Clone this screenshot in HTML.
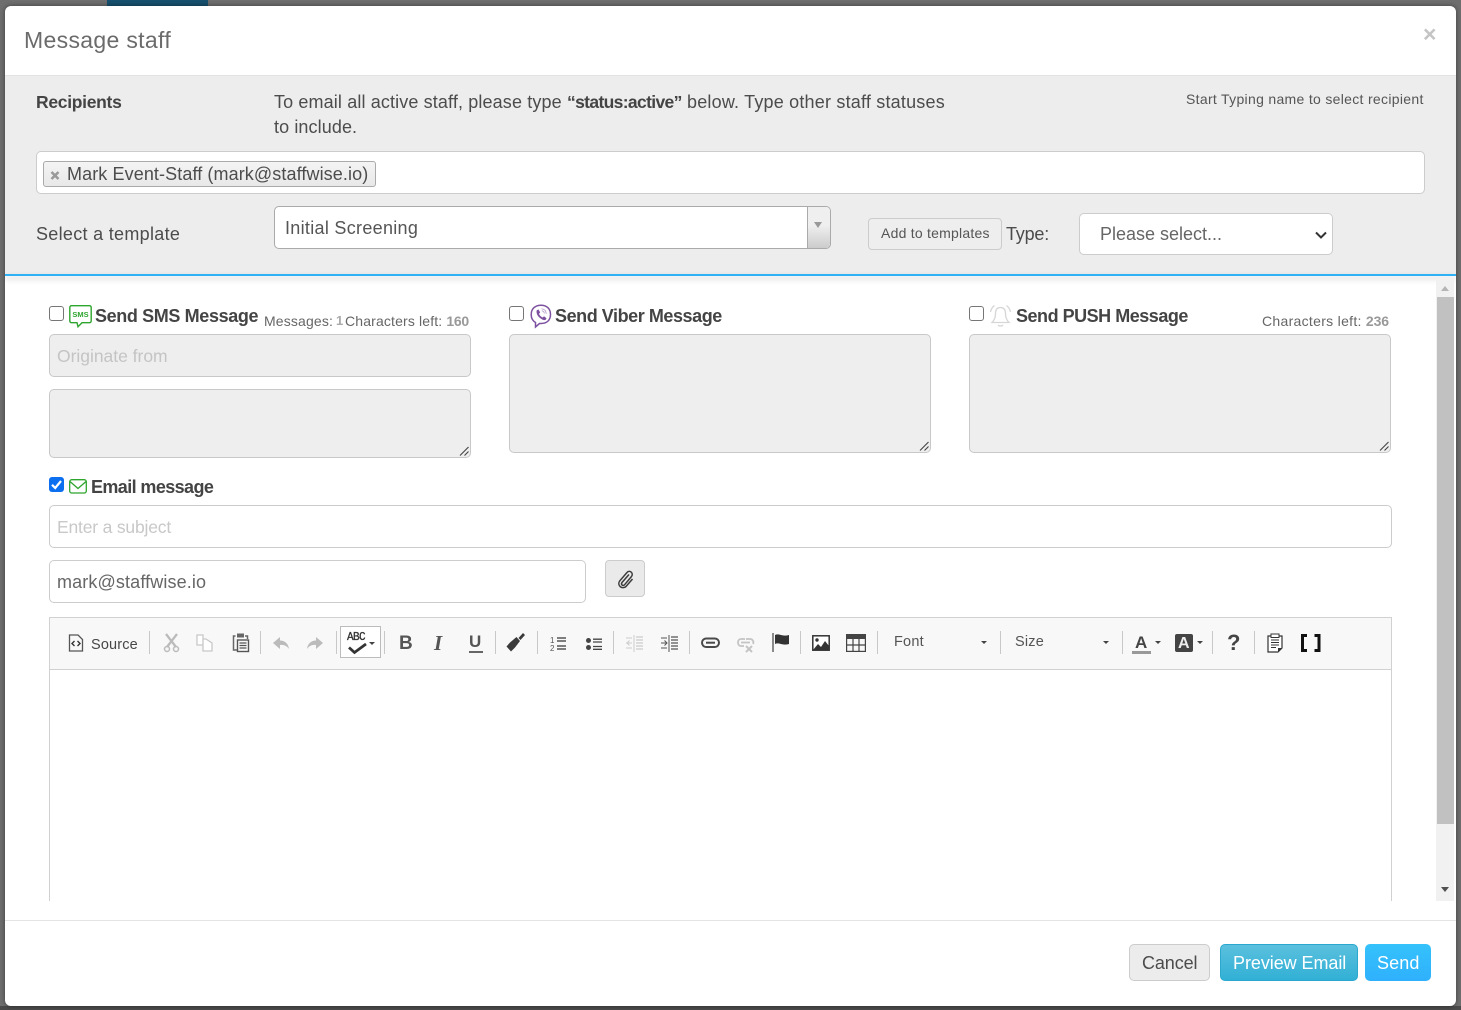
<!DOCTYPE html>
<html><head><meta charset="utf-8"><style>
html,body{margin:0;padding:0;width:1461px;height:1010px;overflow:hidden;background:#6e6e6e;font-family:"Liberation Sans",sans-serif;color:#444}
.a{position:absolute}
.t{position:absolute;white-space:nowrap;line-height:20px}
.box{position:absolute;box-sizing:border-box;border:1px solid #ccc;border-radius:5px;background:#fff}
.gray{background:#eee;border-color:#c8c8c8}
.cb{position:absolute;box-sizing:border-box;width:15px;height:15px;border:1.5px solid #767676;border-radius:3px;background:#fff}
.sep{position:absolute;top:631px;width:1px;height:23px;background:#c8c8c8}
svg{position:absolute;overflow:visible}
.grip{position:absolute;width:10px;height:10px}
</style></head><body>
<div class="a" style="left:107px;top:0;width:101px;height:6px;background:#17506e"></div>
<div class="a" style="left:0;top:1006px;width:1461px;height:4px;background:#4a4a4a"></div>
<div class="a" style="left:5px;top:6px;width:1451px;height:1000px;border-radius:6px;box-shadow:0 0 5px rgba(0,0,0,.45)"></div>
<div class="a" style="left:5px;top:6px;width:1451px;height:1000px;background:#fff;border-radius:6px;overflow:hidden">
<div class="a" style="left:0;top:69px;width:1451px;height:199px;background:#ededed;border-top:1px solid #e3e3e3;box-sizing:border-box"></div>
<div class="a" style="left:0;top:268px;width:1451px;height:2px;background:#2eb2f5;box-shadow:0 3px 6px rgba(0,0,0,.22)"></div>
</div>
<div class="t" style="left:24px;top:30px;font-size:23px;letter-spacing:.33px;color:#6b6b6b">Message staff</div>
<div class="t" style="left:1423px;top:24px;font-size:23px;font-weight:bold;color:#c4c4c4">×</div>
<div class="t" style="left:36px;top:92px;font-size:17.5px;font-weight:bold;letter-spacing:-.3px;color:#444">Recipients</div>
<div class="t" style="left:274px;top:92px;font-size:18px;color:#4c4c4c;letter-spacing:.13px">To email all active staff, please type</div>
<div class="t" style="left:567px;top:92px;font-size:17.5px;font-weight:bold;color:#444;letter-spacing:-.65px">“status:active”</div>
<div class="t" style="left:687px;top:92px;font-size:18px;color:#4c4c4c;letter-spacing:.2px">below. Type other staff statuses</div>
<div class="t" style="left:274px;top:117px;font-size:18px;color:#4c4c4c;letter-spacing:.1px">to include.</div>
<div class="t" style="left:1186px;top:89px;font-size:14px;color:#555;letter-spacing:.31px">Start Typing name to select recipient</div>
<div class="box" style="left:36px;top:151px;width:1389px;height:43px"></div>
<div class="a" style="left:43px;top:161px;width:333px;height:26px;box-sizing:border-box;border:1px solid #aaa;border-radius:3px;background:linear-gradient(#f4f4f4,#e8e8e8)"></div>
<svg style="left:50px;top:171px" width="10" height="9"><path d="M1.500 1 8.500 8M8.500 1 1.500 8" stroke="#999" stroke-width="2.600"/></svg>
<div class="t" style="left:67px;top:164px;font-size:18px;color:#4c4c4c;letter-spacing:.1px">Mark Event-Staff (mark@staffwise.io)</div>
<div class="t" style="left:36px;top:224px;font-size:18px;color:#4c4c4c;letter-spacing:.3px">Select a template</div>
<div class="box" style="left:274px;top:206px;width:557px;height:43px;border-color:#aaa"></div>
<div class="t" style="left:285px;top:218px;font-size:18px;color:#555;letter-spacing:.3px">Initial Screening</div>
<div class="a" style="left:807px;top:207px;width:23px;height:41px;box-sizing:border-box;border-left:1px solid #aaa;border-radius:0 4px 4px 0;background:linear-gradient(#efefef 45%,#ccc)"></div>
<div class="a" style="left:814px;top:222px;width:0;height:0;border:4.500px solid transparent;border-top:6px solid #999;border-bottom:0"></div>
<div class="a" style="left:868px;top:218px;width:134px;height:32px;box-sizing:border-box;border:1px solid #ccc;border-radius:4px;background:#eee"></div>
<div class="t" style="left:881px;top:223px;font-size:14px;color:#555;letter-spacing:.23px">Add to templates</div>
<div class="t" style="left:1006px;top:224px;font-size:18px;color:#4c4c4c;letter-spacing:-.2px">Type:</div>
<div class="box" style="left:1079px;top:213px;width:254px;height:42px"></div>
<div class="t" style="left:1100px;top:224px;font-size:18px;color:#666;letter-spacing:0">Please select...</div>
<svg style="left:1315px;top:231px" width="12" height="8"><path d="M1 1.500 6 6.500 11 1.500" fill="none" stroke="#333" stroke-width="2"/></svg>

<!-- Scrollbar -->
<div class="a" style="left:1436px;top:278px;width:18px;height:623px;background:#f1f1f1"></div>
<div class="a" style="left:1437px;top:297px;width:17px;height:527px;background:#c1c1c1"></div>
<div class="a" style="left:1441px;top:286px;width:0;height:0;border:4.500px solid transparent;border-bottom:5px solid #b5b5b5;border-top:0"></div>
<div class="a" style="left:1441px;top:887px;width:0;height:0;border:4.500px solid transparent;border-top:5px solid #505050;border-bottom:0"></div>

<!-- SMS -->
<div class="cb" style="left:49px;top:306px"></div>
<svg style="left:69px;top:305px" width="23" height="23"><path d="M2.500.7H20.500a1.700 1.700 0 0 1 1.700 1.700V16a1.700 1.700 0 0 1-1.700 1.700H13L9 21.700 8 17.700H2.500a1.700 1.700 0 0 1-1.700-1.700V2.400A1.700 1.700 0 0 1 2.500.7Z" fill="#fff" stroke="#2ea52e" stroke-width="1.400"/><text x="11.500" y="11.800" font-size="7.500" font-weight="bold" text-anchor="middle" fill="#2ea52e" font-family="Liberation Sans">SMS</text></svg>
<div class="t" style="left:95px;top:306px;font-size:18px;font-weight:bold;letter-spacing:-.37px;color:#444">Send SMS Message</div>
<div class="t" style="left:264px;top:311px;font-size:14px;color:#666;letter-spacing:.15px">Messages:</div>
<div class="t" style="left:336px;top:311px;font-size:13px;font-weight:bold;color:#aaa;letter-spacing:-1px">1</div>
<div class="t" style="left:345px;top:311px;font-size:14px;color:#666;letter-spacing:.15px">Characters left: <b style="color:#999;letter-spacing:-.3px">160</b></div>
<div class="box gray" style="left:49px;top:334px;width:422px;height:43px"></div>
<div class="t" style="left:57px;top:346px;font-size:17.5px;color:#c4c4c4;letter-spacing:-.02px">Originate from</div>
<div class="box gray" style="left:49px;top:389px;width:422px;height:69px"></div>
<svg class="grip" style="left:459px;top:446px"><path d="M1 9.500 9.500 1M5.500 9.500 9.500 5.500" stroke="#444" stroke-width="1.100" fill="none"/></svg>

<!-- Viber -->
<div class="cb" style="left:509px;top:306px"></div>
<svg style="left:530px;top:304px" width="22" height="24"><path d="M11 1.200C16.500 1.200 20.500 4.500 20.500 10.500 20.500 16.500 16.500 19.500 11 19.500L9.500 19.500 5.500 23 5.500 18.500C2.800 17 1.200 14.500 1.200 10.500 1.200 4.500 5.500 1.200 11 1.200Z" fill="#fff" stroke="#7d51a0" stroke-width="1.500"/><path d="M6.700 6.200 8.500 5.500 10.200 8.500 9 9.800C9.600 11.500 11 12.900 12.700 13.500L14 12.300 16.500 14.200 15.700 15.700C14.500 16.700 12.500 16 10 14 7.700 12 6 9.500 6.700 6.200Z" fill="#7d51a0"/><path d="M11.500 4.800C14.300 5 16 6.800 16.300 9.800M11.800 6.800C13.300 7 14.200 8 14.400 9.500" fill="none" stroke="#b7a0cc" stroke-width=".9"/></svg>
<div class="t" style="left:555px;top:306px;font-size:18px;font-weight:bold;letter-spacing:-.44px;color:#444">Send Viber Message</div>
<div class="box gray" style="left:509px;top:334px;width:422px;height:119px"></div>
<svg class="grip" style="left:919px;top:441px"><path d="M1 9.500 9.500 1M5.500 9.500 9.500 5.500" stroke="#444" stroke-width="1.100" fill="none"/></svg>

<!-- Push -->
<div class="cb" style="left:969px;top:306px"></div>
<svg style="left:989px;top:304px" width="23" height="24"><path d="M11.500 3.500C15 3.500 16.500 6 16.500 9.500 16.500 14 18 16.500 20 18.500H3C5 16.500 6.500 14 6.500 9.500 6.500 6 8 3.500 11.500 3.500ZM9 21C9.800 22.300 13.200 22.300 14 21M1.500 8C2 5 3.500 3 5.500 1.500M21.500 8C21 5 19.500 3 17.500 1.500" fill="#fff" stroke="#d6d6d6" stroke-width="1.300"/></svg>
<div class="t" style="left:1016px;top:306px;font-size:18px;font-weight:bold;letter-spacing:-.48px;color:#444">Send PUSH Message</div>
<div class="t" style="left:1262px;top:311px;font-size:14px;color:#666;letter-spacing:.3px">Characters left: <b style="color:#999;letter-spacing:-.1px">236</b></div>
<div class="box gray" style="left:969px;top:334px;width:422px;height:119px"></div>
<svg class="grip" style="left:1379px;top:441px"><path d="M1 9.500 9.500 1M5.500 9.500 9.500 5.500" stroke="#444" stroke-width="1.100" fill="none"/></svg>

<!-- Email -->
<div class="a" style="left:49px;top:477px;width:15px;height:15px;background:#0b6ff0;border-radius:3px"></div>
<svg style="left:49px;top:477px" width="15" height="15"><path d="M3 7.800 6.200 11 12 4" fill="none" stroke="#fff" stroke-width="2.200"/></svg>
<svg style="left:69px;top:479px" width="18" height="15"><rect x=".7" y=".7" width="16.600" height="13.300" rx="2" fill="#fff" stroke="#2ea52e" stroke-width="1.300"/><path d="M1 2.500 9 9.500 17 2.500" fill="none" stroke="#2ea52e" stroke-width="1.300"/></svg>
<div class="t" style="left:91px;top:477px;font-size:18px;font-weight:bold;letter-spacing:-.6px;color:#444">Email message</div>
<div class="box" style="left:49px;top:505px;width:1343px;height:43px"></div>
<div class="t" style="left:57px;top:517px;font-size:17.5px;color:#c8c8c8;letter-spacing:-.18px">Enter a subject</div>
<div class="box" style="left:49px;top:560px;width:537px;height:43px"></div>
<div class="t" style="left:57px;top:572px;font-size:18px;color:#666;letter-spacing:.13px">mark@staffwise.io</div>
<div class="a" style="left:605px;top:560px;width:40px;height:37px;box-sizing:border-box;border:1px solid #ccc;border-radius:4px;background:#eaeaea"></div>
<svg style="left:617px;top:570px" width="18" height="18"><path d="M12 4.500 5 12.500C3.500 14.500 6 16.500 7.500 14.800L14.500 6.500C17 3 12.500-.5 10 2.500L2.800 10.800C-.5 15 5 20 9 16.500L15.500 9" fill="none" stroke="#3c3c3c" stroke-width="1.500"/></svg>

<!-- Editor -->
<div class="a" style="left:49px;top:617px;width:1343px;height:284px;box-sizing:border-box;border:1px solid #d1d1d1;border-bottom:0;background:#fff"></div>
<div class="a" style="left:50px;top:618px;width:1341px;height:52px;box-sizing:border-box;background:#f8f8f8;border-bottom:1px solid #d1d1d1"></div>
<svg style="left:68px;top:634px" width="16" height="18"><path d="M1.500 1H10L14.500 5.500V17H1.500Z" fill="none" stroke="#555" stroke-width="1.300"/><path d="M6.500 7 4 9.500 6.500 12M9.500 7 12 9.500 9.500 12" fill="none" stroke="#333" stroke-width="1.400"/></svg>
<div class="t" style="left:91px;top:635px;font-size:14.5px;color:#474747;letter-spacing:.15px">Source</div>
<div class="sep" style="left:149px"></div>
<svg style="left:163px;top:633px" width="18" height="20"><path d="M3 1 13 14M14 1 4 14" stroke="#bbb" stroke-width="2.300"/><circle cx="4" cy="16" r="2.500" fill="none" stroke="#bbb" stroke-width="1.500"/><circle cx="13" cy="16" r="2.500" fill="none" stroke="#bbb" stroke-width="1.500"/></svg>
<svg style="left:196px;top:634px" width="18" height="18"><path d="M1 1H7V11H1ZM7 5H10L16 9V17H7V11" fill="#fff" stroke="#c8c8c8" stroke-width="1.300"/></svg>
<svg style="left:232px;top:632px" width="18" height="21"><path d="M3.500 4H1.500V18H5" fill="none" stroke="#666" stroke-width="1.500"/><path d="M13 4H15.500V7" fill="none" stroke="#666" stroke-width="1.500"/><rect x="5" y="1.500" width="7" height="4" fill="#666"/><rect x="5.500" y="8" width="11" height="11.500" fill="none" stroke="#555" stroke-width="1.400"/><path d="M7.500 11H14.500M7.500 13.500H14.500M7.500 16H14.500" stroke="#555" stroke-width="1.200"/></svg>
<div class="sep" style="left:260px"></div>
<svg style="left:272px;top:636px" width="18" height="14"><path d="M8 1 1 7 8 13V9C12 8.500 15 10 17 13 16.500 8 13 4.500 8 4.500Z" fill="#bbb"/></svg>
<svg style="left:306px;top:636px" width="18" height="14"><path d="M10 1 17 7 10 13V9C6 8.500 3 10 1 13 1.500 8 5 4.500 10 4.500Z" fill="#bbb"/></svg>
<div class="sep" style="left:336px"></div>
<div class="a" style="left:340px;top:626px;width:41px;height:32px;box-sizing:border-box;border:1px solid #bcbcbc;background:#fff"></div>
<div class="t" style="left:347px;top:631px;font-size:11px;font-family:'Liberation Mono',monospace;letter-spacing:-.6px;color:#333;line-height:14px;-webkit-text-stroke:.3px #333;transform:scaleY(1.1)">ABC</div>
<svg style="left:348px;top:643px" width="20" height="11"><path d="M1 4.500 6.500 9.500 18 1" fill="none" stroke="#333" stroke-width="2.800"/></svg>
<div class="a" style="left:369px;top:642px;width:0;height:0;border:3px solid transparent;border-top:3px solid #444;border-bottom:0"></div>
<div class="sep" style="left:384px"></div>
<div class="t" style="left:399px;top:634px;font-size:19px;font-weight:bold;color:#555">B</div>
<div class="t" style="left:434px;top:633px;font-family:'Liberation Serif',serif;font-style:italic;font-weight:bold;font-size:21px;color:#555">I</div>
<div class="t" style="left:469px;top:632px;font-size:17px;font-weight:bold;color:#555">U</div>
<div class="a" style="left:469px;top:651px;width:14px;height:2px;background:#666"></div>
<div class="sep" style="left:495px"></div>
<svg style="left:505px;top:632px" width="21" height="20"><path d="M11.500 5 15 9 10 15.500 6 19.500 1.500 14.500 5 10.500Z" fill="#3a3a3a"/><path d="M13.500 6 18 1 20 3 15.500 8Z" fill="#3a3a3a"/></svg>
<div class="sep" style="left:537px"></div>
<svg style="left:550px;top:636px" width="17" height="16"><text x="0" y="7" font-size="8" font-family="Liberation Sans" fill="#555">1</text><text x="0" y="15" font-size="8" font-family="Liberation Sans" fill="#555">2</text><path d="M7 2H16M7 5H16M7 10H16M7 13H16" stroke="#555" stroke-width="1.500"/></svg>
<svg style="left:585px;top:637px" width="18" height="14"><circle cx="3.500" cy="3.500" r="2.500" fill="#444"/><circle cx="3.500" cy="10.500" r="2.500" fill="#444"/><path d="M8 2.200H17M8 5H17M8 9.500H17M8 12.300H17" stroke="#444" stroke-width="1.300"/></svg>
<div class="sep" style="left:613px"></div>
<svg style="left:626px;top:635px" width="18" height="17"><path d="M8 0V17" stroke="#ccc"/><path d="M0 8H6M3.500 5.500 1 8 3.500 10.500M0 3H6M0 13H6" stroke="#ccc" stroke-width="1" fill="none"/><path d="M10 2H17M10 5H17M10 8H17M10 11H17M10 14H17" stroke="#ccc" stroke-width="1.200"/></svg>
<svg style="left:661px;top:635px" width="18" height="17"><path d="M8 0V17" stroke="#555"/><path d="M0 8H6M3.500 5.500 6 8 3.500 10.500M0 3H6M0 13H6" stroke="#555" stroke-width="1" fill="none"/><path d="M10 2H17M10 5H17M10 8H17M10 11H17M10 14H17" stroke="#555" stroke-width="1.200"/></svg>
<div class="sep" style="left:689px"></div>
<svg style="left:701px;top:637px" width="19" height="12"><rect x="1" y="1.500" width="17" height="8.500" rx="4.200" fill="none" stroke="#4a4a4a" stroke-width="2"/><path d="M5 5.700H14" stroke="#4a4a4a" stroke-width="2"/></svg>
<svg style="left:736px;top:637px" width="19" height="16"><path d="M9 2H5C1 2 1 9 5 9H8M10 2H14C17 2 18 5 17 7M5 5.500H14" fill="none" stroke="#c4c4c4" stroke-width="1.800"/><path d="M10 9 16 15M16 9 10 15" stroke="#c4c4c4" stroke-width="2"/></svg>
<div class="sep" style="left:800px"></div>
<svg style="left:772px;top:633px" width="18" height="20"><path d="M1 0V19" stroke="#666" stroke-width="1.500"/><path d="M3 2C7 0 10 4 17 2V11C10 13 7 9 3 11Z" fill="#333"/></svg>
<svg style="left:812px;top:635px" width="18" height="16"><rect x=".8" y=".8" width="16.400" height="14.400" fill="#fff" stroke="#333" stroke-width="1.500"/><path d="M1 15 6 9 9 12 13 6 17 11V15Z" fill="#333"/><circle cx="5" cy="5" r="1.700" fill="#333"/></svg>
<svg style="left:846px;top:634px" width="20" height="18"><rect x=".6" y=".6" width="18.800" height="16.800" fill="none" stroke="#444" stroke-width="1.200"/><rect x="0" y="0" width="20" height="5" fill="#444"/><path d="M7 5V17M13 5V17M0 11H20" stroke="#444" stroke-width="1.200"/></svg>
<div class="sep" style="left:877px"></div>
<div class="t" style="left:894px;top:632px;font-size:14.5px;color:#555;letter-spacing:.2px">Font</div>
<div class="a" style="left:981px;top:641px;width:0;height:0;border:3px solid transparent;border-top:3px solid #444;border-bottom:0"></div>
<div class="sep" style="left:1000px"></div>
<div class="t" style="left:1015px;top:632px;font-size:14.5px;color:#555;letter-spacing:.2px">Size</div>
<div class="a" style="left:1103px;top:641px;width:0;height:0;border:3px solid transparent;border-top:3px solid #444;border-bottom:0"></div>
<div class="sep" style="left:1122px"></div>
<div class="t" style="left:1135px;top:633px;font-size:17px;font-weight:bold;color:#444">A</div>
<div class="a" style="left:1132px;top:651px;width:19px;height:3px;background:#999"></div>
<div class="a" style="left:1155px;top:641px;width:0;height:0;border:3px solid transparent;border-top:3px solid #444;border-bottom:0"></div>
<div class="a" style="left:1175px;top:634px;width:18px;height:18px;background:#444;border-radius:2px"></div>
<div class="t" style="left:1178px;top:634px;font-size:16px;font-weight:bold;color:#eee">A</div>
<div class="a" style="left:1197px;top:641px;width:0;height:0;border:3px solid transparent;border-top:3px solid #444;border-bottom:0"></div>
<div class="sep" style="left:1212px"></div>
<div class="t" style="left:1227px;top:633px;font-size:22px;font-weight:bold;color:#444">?</div>
<div class="sep" style="left:1254px"></div>
<svg style="left:1266px;top:633px" width="18" height="21"><path d="M5 3H2V19H12L16 15V3H13" fill="#fff" stroke="#333" stroke-width="1.200"/><rect x="5" y="1" width="8" height="3.500" fill="#fff" stroke="#333"/><path d="M5 7H13M5 9.500H13M5 12H13M5 14.500H10" stroke="#333" stroke-width="1.100"/><path d="M12 19 12 15H16Z" fill="#333"/></svg>
<svg style="left:1301px;top:634px" width="20" height="18"><path d="M6 1.500H1.500V16.500H6M13.500 1.500H18V16.500H13.500" fill="none" stroke="#111" stroke-width="3"/></svg>

<!-- Footer -->
<div class="a" style="left:5px;top:920px;width:1451px;height:1px;background:#e4e4e4"></div>
<div class="a" style="left:1129px;top:944px;width:81px;height:37px;box-sizing:border-box;border:1px solid #ccc;border-radius:5px;background:#ececec"></div>
<div class="t" style="left:1142px;top:953px;font-size:18px;color:#4c4c4c;letter-spacing:-.1px">Cancel</div>
<div class="a" style="left:1220px;top:944px;width:138px;height:37px;box-sizing:border-box;border:1px solid #2ca8cf;border-radius:5px;background:linear-gradient(#5bc0de,#31b0d5)"></div>
<div class="t" style="left:1233px;top:953px;font-size:18px;color:#fff;letter-spacing:-.06px">Preview Email</div>
<div class="a" style="left:1365px;top:944px;width:66px;height:37px;border-radius:5px;background:linear-gradient(#35c2fb,#2fb0fd)"></div>
<div class="t" style="left:1377px;top:953px;font-size:18px;color:#fff;letter-spacing:.1px">Send</div>
</body></html>
